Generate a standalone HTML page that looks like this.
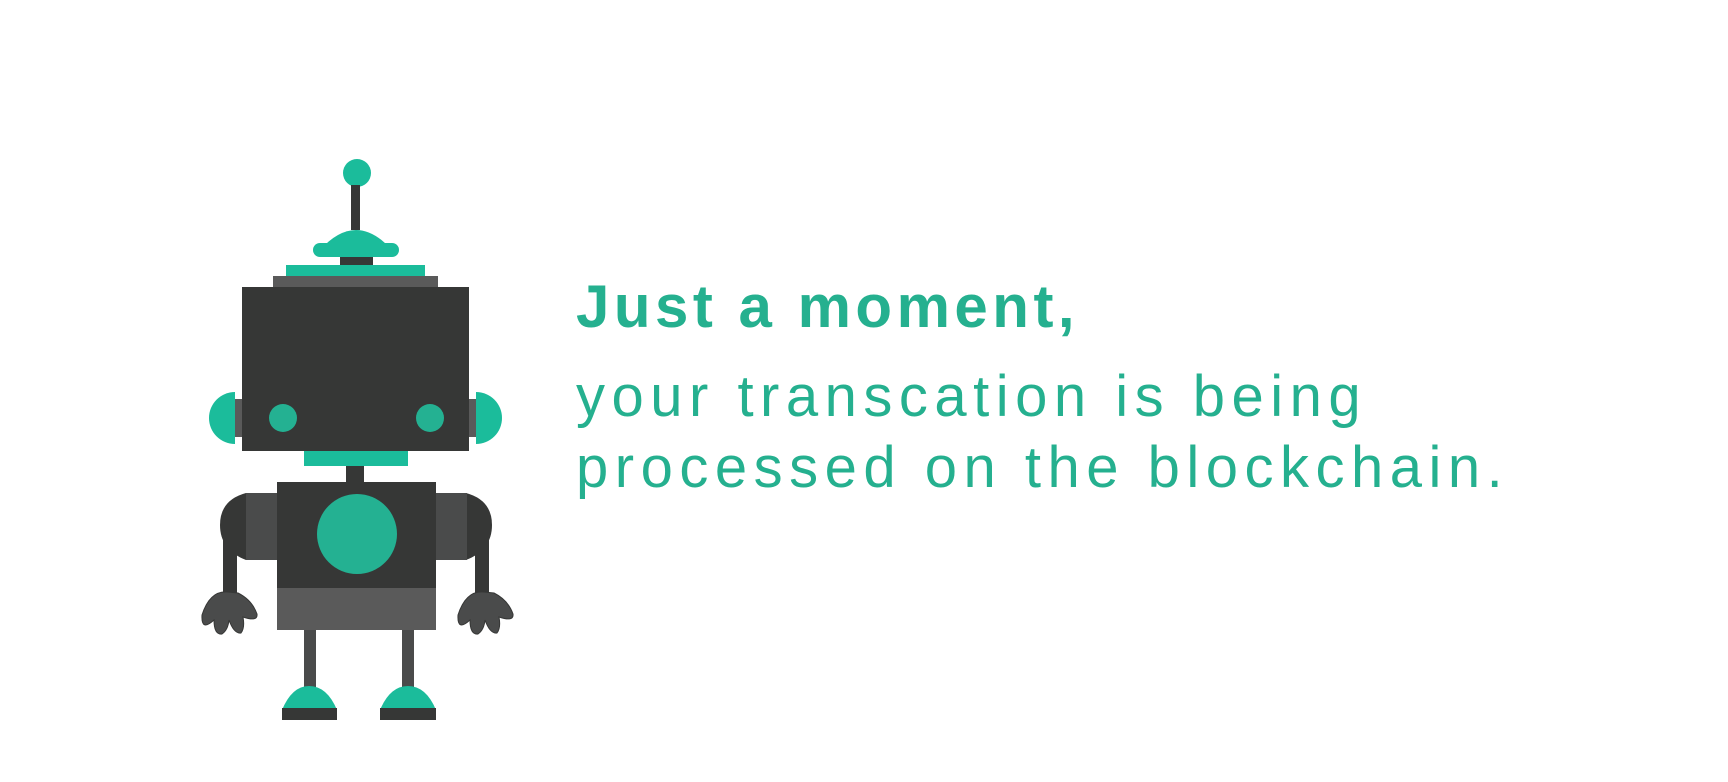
<!DOCTYPE html>
<html><head><meta charset="utf-8"><style>
html,body{margin:0;padding:0;background:#fff;width:1728px;height:782px;overflow:hidden}
svg{position:absolute;left:0;top:0}
.t{position:absolute;left:576px;color:#25b08f;font-family:"Liberation Sans",sans-serif;white-space:nowrap}
#h{top:272px;font-size:60px;font-weight:bold;letter-spacing:4.5px;line-height:70px}
.l{font-size:58px;letter-spacing:6.5px;line-height:70px}
#a{top:362px}#b{top:433px}
</style></head><body>
<svg width="1728" height="782" viewBox="0 0 1728 782">
<circle cx="357" cy="173" r="14" fill="#1bbc9b"/>
<rect x="351" y="185" width="9" height="45" fill="#363736"/>
<path d="M320 257 L320 250 Q356 210 392 250 L392 257Z" fill="#1bbc9b"/>
<circle cx="320" cy="250" r="7" fill="#1bbc9b"/><circle cx="392" cy="250" r="7" fill="#1bbc9b"/>
<rect x="320" y="243" width="72" height="14" fill="#1bbc9b"/>
<rect x="340" y="257" width="33" height="8" fill="#363736"/>
<rect x="286" y="265" width="139" height="11" fill="#1bbc9b"/>
<rect x="273" y="276" width="165" height="11" fill="#5a5a5a"/>
<rect x="235" y="399" width="7" height="38" fill="#5a5a5a"/>
<rect x="469" y="399" width="7" height="38" fill="#5a5a5a"/>
<path d="M235 392 A26 26 0 0 0 235 444Z" fill="#1bbc9b"/>
<path d="M476 392 A26 26 0 0 1 476 444Z" fill="#1bbc9b"/>
<rect x="242" y="287" width="227" height="164" fill="#363736"/>
<circle cx="283" cy="418" r="14" fill="#24b192"/><circle cx="430" cy="418" r="14" fill="#24b192"/>
<rect x="304" y="451" width="104" height="15" fill="#1bbc9b"/>
<rect x="346" y="466" width="18" height="16" fill="#363736"/>
<path d="M246 493 Q220 500 220 525 Q220 550 246 560Z" fill="#363736"/>
<path d="M466 493 Q492 500 492 525 Q492 550 466 560Z" fill="#363736"/>
<rect x="223" y="530" width="14" height="65" fill="#363736"/>
<rect x="475" y="530" width="14" height="65" fill="#363736"/>
<g fill="#4a4b4b" stroke="#363736" stroke-width="1">
<path d="M228 592 Q210 590 202 615 Q201 632 214 620 Q214 635 222 634 Q228 630 229 620 Q234 634 241 633 Q245 628 243 617 Q258 622 257 614 Q252 600 238 593Z"/>
<path d="M484 592 Q466 590 458 615 Q457 632 470 620 Q470 635 478 634 Q484 630 485 620 Q490 634 497 633 Q501 628 499 617 Q514 622 513 614 Q508 600 494 593Z"/>
</g>
<rect x="246" y="493" width="31" height="67" fill="#4a4b4b"/>
<rect x="436" y="493" width="31" height="67" fill="#4a4b4b"/>
<rect x="277" y="482" width="159" height="148" fill="#363736"/>
<rect x="277" y="588" width="159" height="42" fill="#5a5a5a"/>
<circle cx="357" cy="534" r="40" fill="#24b192"/>
<rect x="304" y="630" width="12" height="58" fill="#4a4b4b"/>
<rect x="402" y="630" width="12" height="58" fill="#4a4b4b"/>
<path d="M282 710 Q292 686 309 686 Q327 686 337 710Z" fill="#1bbc9b"/>
<path d="M380 710 Q390 686 408 686 Q426 686 436 710Z" fill="#1bbc9b"/>
<rect x="282" y="708" width="55" height="12" fill="#363736"/>
<rect x="380" y="708" width="56" height="12" fill="#363736"/>
</svg>
<div class="t" id="h">Just a moment,</div>
<div class="t l" id="a">your transcation is being</div>
<div class="t l" id="b">processed on the blockchain.</div>
</body></html>
